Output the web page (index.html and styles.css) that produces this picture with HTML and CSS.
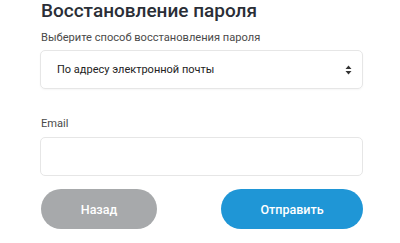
FILE: index.html
```html
<!DOCTYPE html>
<html lang="ru">
<head>
<meta charset="utf-8">
<link rel="stylesheet" href="styles.css">
</head>
<body>
<div class="form">
  <h1 class="title">Восстановление пароля</h1>
  <div class="label">Выберите способ восстановления пароля</div>
  <div class="select">
    <span>По адресу электронной почты</span>
    <svg class="arrows" width="7" height="10" viewBox="0 0 7 10"><path d="M3.5 0.5 L6.5 4 H0.5 Z M3.5 9.5 L6.5 6 H0.5 Z" fill="#333"/></svg>
  </div>
  <div class="label email-label">Email</div>
  <div class="input"></div>
  <div class="buttons">
    <button class="btn back">Назад</button>
    <button class="btn send">Отправить</button>
  </div>
</div>
</body>
</html>
```
FILE: styles.css
```css
html, body { margin: 0; padding: 0; background: #fff; }
body { font-family: Roboto, "Noto Sans", sans-serif; }
.form { width: 323px; margin-left: 40px; padding-top: 0; }
.title { margin: 0; padding-left: 1px; font-size: 19px; font-weight: 500; color: #2a2e36; line-height: 22px; }
.label { font-size: 11.1px; color: #4a4a4a; margin-top: 9px; padding-left: 1px; line-height: 13px; }
.select { margin-top: 6px; height: 37px; border: 1px solid #e6e6e6; border-radius: 5px; display: flex; align-items: center; justify-content: space-between; padding: 0 10px 0 16px; font-size: 11px; color: #222; box-shadow: 0 1px 2px rgba(0,0,0,0.04); }
.email-label { margin-top: 28px; }
.input { margin-top: 7px; height: 37px; border: 1px solid #e6e6e6; border-radius: 5px; }
.buttons { display: flex; justify-content: space-between; margin-top: 13px; padding-left: 1px; }
.btn { border: 0; height: 40px; border-radius: 20px; color: #fff; font-family: Roboto, sans-serif; font-weight: 500; font-size: 12.5px; }
.back { width: 116px; background: #a7a9ab; }
.send { width: 142px; background: #1f96d6; }
```
